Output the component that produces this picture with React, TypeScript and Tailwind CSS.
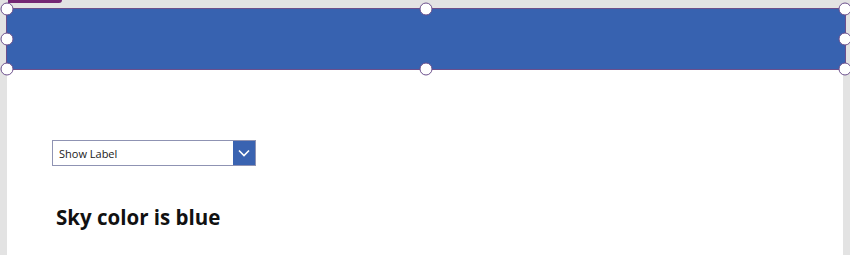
import React from 'react';

// Selection handle positions, relative to the banner box
const HANDLES = [
  'left-0 top-0',
  'left-1/2 top-0',
  'left-full top-0',
  'left-0 top-1/2',
  'left-full top-1/2',
  'left-0 top-full',
  'left-1/2 top-full',
  'left-full top-full',
];

const Handle = ({ pos }: { pos: string }) => (
  <span
    className={`absolute ${pos} w-[13px] h-[13px] -translate-x-1/2 -translate-y-1/2 rounded-full bg-white border border-[#6b4f8c]`}
  />
);

const Dropdown = () => (
  <div className="flex w-[204px] h-[26px] border border-[#8f93b3] bg-white">
    <span className="flex-1 flex items-center pl-[6px] text-[11px] text-[#1a1a1a] leading-none">
      Show Label
    </span>
    <span className="w-[22px] h-full flex items-center justify-center bg-[#3a63b1]">
      <svg width="12" height="8" viewBox="0 0 12 8" fill="none">
        <path d="M1 1.5 L6 6.5 L11 1.5" stroke="white" strokeWidth="1.6" />
      </svg>
    </span>
  </div>
);

export default function App() {
  return (
    <div
      className="relative w-[850px] h-[255px] bg-[#e3e3e3] px-[7px] pt-[8px] overflow-hidden"
      style={{ fontFamily: '"Open Sans", "Noto Sans", sans-serif' }}
    >
      <span className="absolute left-[8px] top-0 w-[54px] h-[3px] bg-[#742774] rounded-br-[4px]" />
      <div className="flex flex-col h-full bg-white">
        <div className="relative -ml-[1px] -mr-[3px] h-[62px] bg-[#3762b0] border border-[#6b4f8c]">
          {HANDLES.map((p) => (
            <Handle key={p} pos={p} />
          ))}
        </div>
        <div className="mt-[70px] ml-[45px]">
          <Dropdown />
        </div>
        <div className="mt-[41px] ml-[49px] text-[20.5px] font-bold text-[#111] leading-none">
          Sky color is blue
        </div>
      </div>
    </div>
  );
}
